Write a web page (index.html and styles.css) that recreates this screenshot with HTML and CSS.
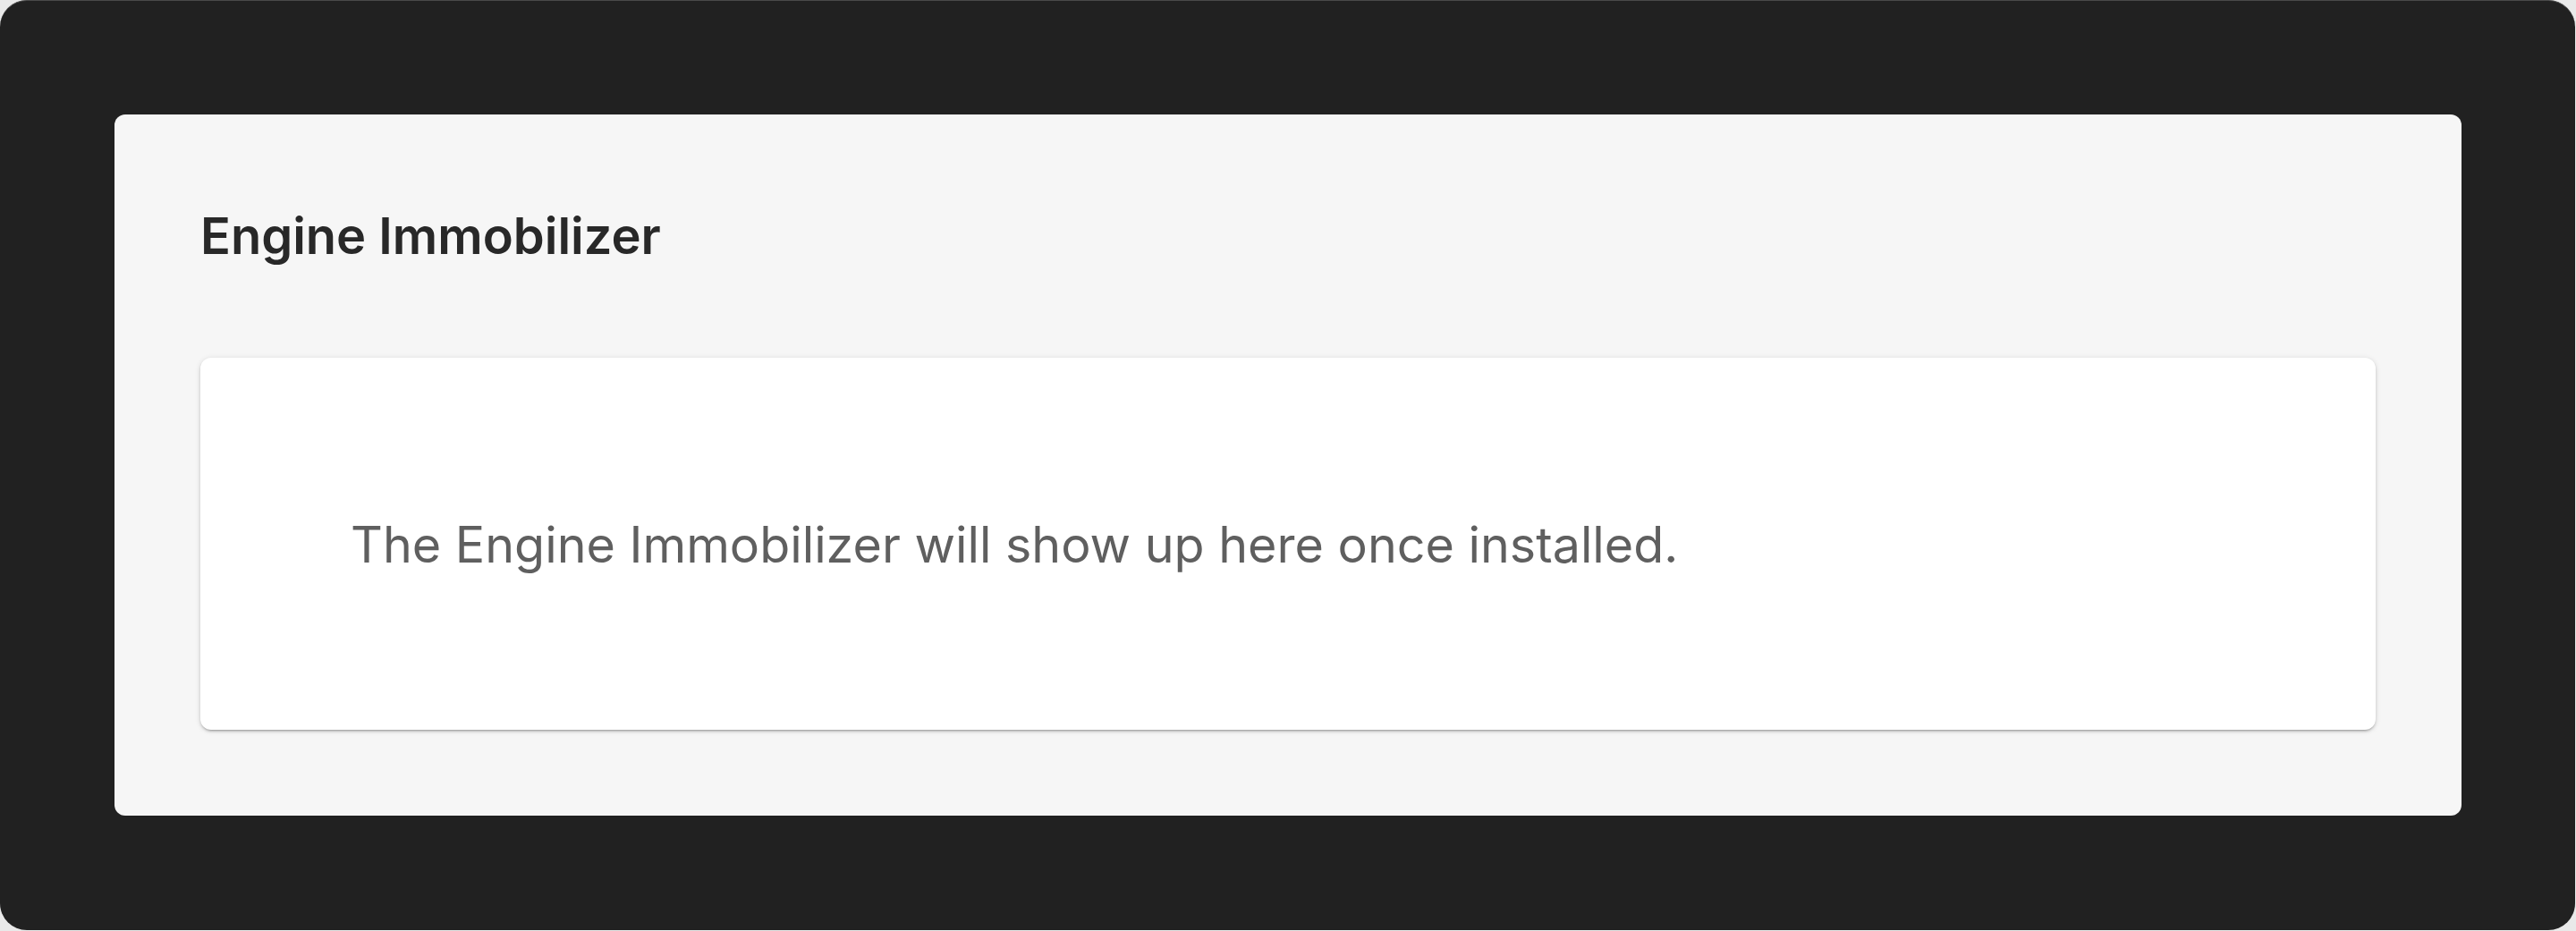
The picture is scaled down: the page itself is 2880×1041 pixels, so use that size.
FILE: index.html
```html
<!DOCTYPE html>
<html lang="en">
<head>
<meta charset="utf-8">
<title>Engine Immobilizer</title>
<link rel="stylesheet" href="styles.css">
</head>
<body>
<div class="frame">
  <section class="panel">
    <h1 class="panel-title">Engine Immobilizer</h1>
    <div class="card">
      <p class="card-text">The Engine Immobilizer will show up here once installed.</p>
    </div>
  </section>
</div>
</body>
</html>
```

FILE: styles.css
```css
html, body {
  margin: 0;
  padding: 0;
}
body {
  background: #e9e9e9;
  font-family: Inter, "Noto Sans", "Liberation Sans", sans-serif;
  width: 2880px;
  height: 1041px;
  overflow: hidden;
}
.frame {
  box-sizing: border-box;
  width: 2879px;
  height: 1040px;
  background: #212121;
  border-radius: 30px;
  border-top: 1px solid #4a4a4a;
  padding: 127px 127px 128px 128px;
}
.panel {
  box-sizing: border-box;
  height: 784px;
  background: #f6f6f6;
  border-radius: 12px;
  padding: 96px;
  display: flex;
  flex-direction: column;
}
.panel-title {
  margin: 0 0 96px 0;
  height: 80px;
  line-height: 80px;
  font-size: 56px;
  font-weight: 600;
  color: #282828;
  letter-spacing: 0;
}
.card {
  height: 416px;
  background: #ffffff;
  border-radius: 12px;
  box-shadow: 0 3px 2px -2px rgba(0,0,0,0.2), 0 2px 3px 0 rgba(0,0,0,0.14), 0 1px 6px 0 rgba(0,0,0,0.12);
  display: flex;
  align-items: center;
  padding-left: 168px;
}
.card-text {
  margin: 0;
  font-size: 55.6px;
  font-weight: 400;
  color: #5f5f5f;
}
```
